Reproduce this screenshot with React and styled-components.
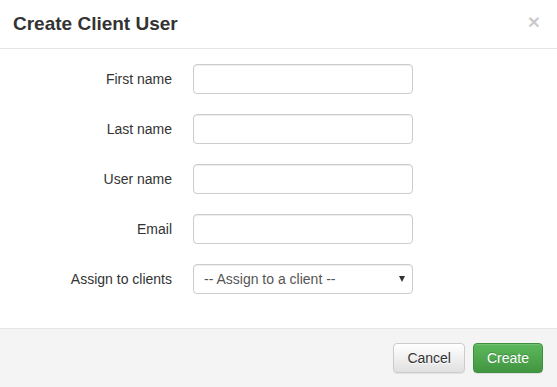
import React from 'react';
import styled, { createGlobalStyle } from 'styled-components';

const GlobalStyle = createGlobalStyle`
  html, body {
    margin: 0;
    padding: 0;
    background: #fff;
  }
  body {
    font-family: "Liberation Sans", Arial, sans-serif;
    font-size: 14px;
    color: #333;
  }
`;

const Modal = styled.div`
  width: 557px;
  height: 387px;
  display: flex;
  flex-direction: column;
  background: #fff;
  overflow: hidden;
`;

const Header = styled.div`
  display: flex;
  align-items: center;
  justify-content: space-between;
  height: 48px;
  padding: 0 17px 0 13px;
  border-bottom: 1px solid #e5e5e5;
`;

const Title = styled.h4`
  margin: 0;
  font-size: 19px;
  font-weight: bold;
  color: #333;
  line-height: 1.1;
`;

const Close = styled.button`
  border: 0;
  background: none;
  padding: 0;
  margin-top: -5px;
  font-family: "Liberation Sans", Arial, sans-serif;
  font-size: 21px;
  font-weight: bold;
  line-height: 1;
  color: #000;
  opacity: 0.2;
  text-shadow: 0 1px 0 #fff;
  cursor: pointer;
`;

const Body = styled.div`
  flex: 1;
  padding: 15px 0;
  display: flex;
  flex-direction: column;
  gap: 20px;
`;

const Row = styled.div`
  display: grid;
  grid-template-columns: 172px 220px;
  column-gap: 21px;
  align-items: center;
`;

const Label = styled.label`
  text-align: right;
  font-size: 14px;
  color: #333;
`;

const Input = styled.input`
  box-sizing: border-box;
  width: 220px;
  height: 30px;
  padding: 5px 10px;
  border: 1px solid #ccc;
  border-radius: 4px;
  font-family: inherit;
  font-size: 14px;
  color: #555;
  box-shadow: inset 0 1px 1px rgba(0, 0, 0, 0.075);
  outline: none;
`;

const SelectBox = styled.div`
  position: relative;
  box-sizing: border-box;
  width: 220px;
  height: 30px;
  padding: 0 10px;
  display: flex;
  align-items: center;
  border: 1px solid #ccc;
  border-radius: 4px;
  font-size: 14px;
  color: #555;
  box-shadow: inset 0 1px 1px rgba(0, 0, 0, 0.075);
`;

const Caret = styled.span`
  position: absolute;
  right: 7px;
  top: 11px;
  width: 0;
  height: 0;
  border-left: 3.5px solid transparent;
  border-right: 3.5px solid transparent;
  border-top: 6px solid #333;
`;

const Footer = styled.div`
  display: flex;
  justify-content: flex-end;
  align-items: center;
  gap: 8px;
  height: 58px;
  padding: 0 14px 0 15px;
  border-top: 1px solid #e5e5e5;
  background: #f4f4f4;
`;

const Button = styled.button`
  box-sizing: border-box;
  height: 30px;
  padding: 0 13px;
  border-radius: 4px;
  font-family: "Liberation Sans", Arial, sans-serif;
  font-size: 14px;
  cursor: pointer;
  border: 1px solid ${(p) => (p.$primary ? '#3e8f3e' : '#ccc')};
  color: ${(p) => (p.$primary ? '#fff' : '#333')};
  text-shadow: ${(p) => (p.$primary ? '0 -1px 0 rgba(0,0,0,.2)' : '0 1px 0 #fff')};
  background: ${(p) =>
    p.$primary
      ? 'linear-gradient(to bottom, #5cb85c 0%, #419641 100%)'
      : 'linear-gradient(to bottom, #fff 0%, #e0e0e0 100%)'};
  box-shadow: inset 0 1px 0 rgba(255, 255, 255, 0.15), 0 1px 1px rgba(0, 0, 0, 0.075);
`;

const fields = ['First name', 'Last name', 'User name', 'Email'];

export default function App() {
  return (
    <>
      <GlobalStyle />
      <Modal>
        <Header>
          <Title>Create Client User</Title>
          <Close>×</Close>
        </Header>
        <Body>
          {fields.map((f) => (
            <Row key={f}>
              <Label>{f}</Label>
              <Input type="text" />
            </Row>
          ))}
          <Row>
            <Label>Assign to clients</Label>
            <SelectBox>
              -- Assign to a client --
              <Caret />
            </SelectBox>
          </Row>
        </Body>
        <Footer>
          <Button>Cancel</Button>
          <Button $primary>Create</Button>
        </Footer>
      </Modal>
    </>
  );
}
